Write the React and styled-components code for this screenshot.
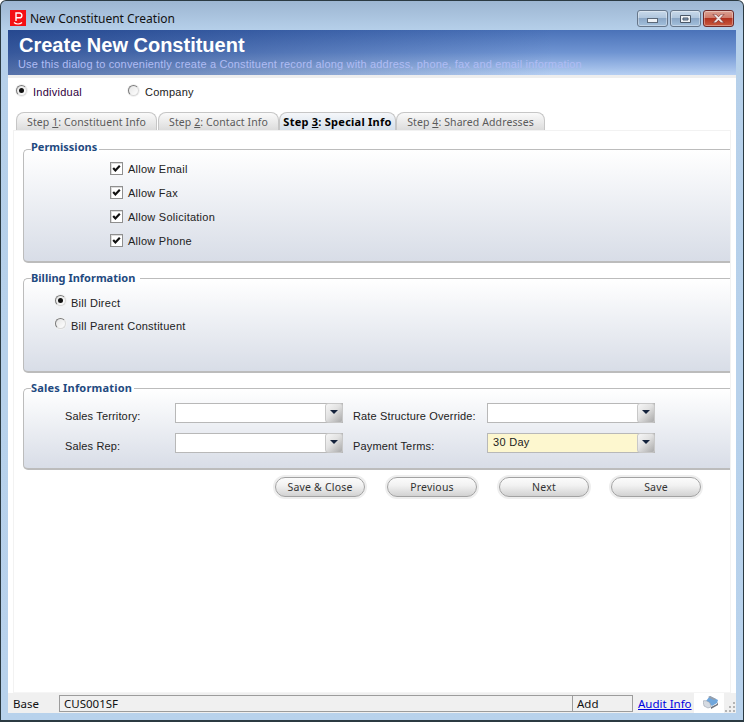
import React from 'react';
import styled, { createGlobalStyle } from 'styled-components';

const GlobalStyle = createGlobalStyle`
  html, body { margin: 0; padding: 0; background: #fff; }
  * { box-sizing: border-box; }
`

const Win = styled.div`
  width: 744px;
  height: 722px;
  display: flex;
  flex-direction: column;
  padding: 0 7px 7px 7px;
  border: 1px solid #2b3a42;
  border-bottom-width: 2px;
  border-radius: 6px 6px 0 0;
  background: linear-gradient(180deg, #9db6d2 0, #b6d0ea 30px, #b8d2ec 100%);
  font-family: "Liberation Sans", Arial, sans-serif;
`

const TitleBar = styled.div`
  height: 29px;
  flex: none;
  display: flex;
  align-items: flex-start;
  padding: 9px 1px 0 2px;
`

const TitleText = styled.span`
  margin-left: 4px;
  font: 12px/18px "Noto Sans", sans-serif;
  color: #111;
`

const WinButtons = styled.div`
  margin-left: auto;
  display: flex;
  gap: 2px;
  margin-right: 1px;
`

const WinButton = styled.div`
  width: 31px;
  height: 17px;
  display: flex;
  align-items: center;
  justify-content: center;
  border: 1px solid ${p => (p.$close ? '#6e2a2a' : '#66768a')};
  border-radius: 3px;
  box-shadow: inset 0 0 0 1px rgba(255, 255, 255, 0.35);
  background: ${p => p.$close
    ? 'linear-gradient(180deg, #dba193 0, #cf7b6b 45%, #b2321f 50%, #c9593f 100%)'
    : 'linear-gradient(180deg, #c8d9ea 0, #b0c6dd 45%, #8ba7c6 50%, #a3c0dc 100%)'};
`

const Client = styled.div`
  flex: 1;
  display: flex;
  flex-direction: column;
  background: #fff;
  min-height: 0;
`

const Banner = styled.div`
  height: 45px;
  flex: none;
  padding: 4px 11px 0 10px;
  background:
    linear-gradient(90deg, rgba(8, 38, 110, 0.55) 0, rgba(60, 100, 180, 0) 75%),
    linear-gradient(180deg, #4a72b8 0, #6f94d2 50%, #b6cff2 100%);
`

const BannerTitle = styled.div`
  font-size: 20px;
  line-height: 23px;
  font-weight: bold;
  color: #fff;
  margin-left: 1px;
`

const BannerSub = styled.div`
  font-size: 11px;
  line-height: 14px;
  letter-spacing: 0.17px;
  color: #b0bcf4;
  white-space: nowrap;
`

const Strip = styled.div`
  height: 3px;
  flex: none;
  background: #eeeeee;
`

const Body = styled.div`
  flex: 1;
  display: flex;
  flex-direction: column;
  min-height: 0;
  padding: 0 0 0 5px;
`

const TypeRow = styled.div`
  display: flex;
  height: 34px;
  padding: 6px 0 0 3px;
  flex: none;
`

const Choice = styled.label`
  display: flex;
  align-items: center;
  gap: ${p => p.$gap || 6}px;
  height: ${p => p.$h || 16}px;
  width: ${p => (p.$w ? `${p.$w}px` : 'auto')};
  font-size: 11px;
  letter-spacing: 0.25px;
  color: ${p => p.$color || '#222'};
`

const Radio = styled.span`
  width: 11px;
  height: 11px;
  flex: none;
  display: flex;
  align-items: center;
  justify-content: center;
  margin-top: -4px;
  border-radius: 50%;
  border: 1px solid;
  border-color: #7a7a7a #d8d8d8 #d8d8d8 #7a7a7a;
  background: linear-gradient(135deg, #e4e4e4, #fff);
  box-shadow: 0 0 0 1px #f2f2f2;
  &::after {
    content: '';
    width: 5px;
    height: 5px;
    border-radius: 50%;
    background: ${p => (p.$on ? '#111' : 'transparent')};
  }
`

const Tabs = styled.div`
  display: flex;
  height: 18px;
  flex: none;
  padding-left: 3px;
`

const Tab = styled.div`
  width: ${p => p.$w}px;
  margin-right: ${p => p.$gap}px;
  height: 18px;
  display: flex;
  justify-content: center;
  align-items: center;
  white-space: nowrap;
  border: 1px solid #c6c6c6;
  border-bottom: none;
  border-radius: 8px 8px 0 0;
  font: ${p => (p.$active ? 'bold 11px' : '10.5px')} "Noto Sans", sans-serif;
  letter-spacing: ${p => (p.$active ? 0.25 : 0.1)}px;
  color: ${p => (p.$active ? '#000' : '#5a5a5a')};
  background: ${p => p.$active
    ? 'linear-gradient(180deg, #f5f7fa 0, #d5dfea 100%)'
    : 'linear-gradient(180deg, #fafafa 0, #dcdcdc 100%)'};
`

const Pane = styled.div`
  flex: 1;
  display: flex;
  flex-direction: column;
  margin-right: 5px;
  padding: 9px 0 0 9px;
  border: 1px solid #f2f2f2;
  border-bottom-color: #f5f5f5;
`

const Group = styled.fieldset`
  height: ${p => p.$h}px;
  flex: none;
  margin: 0 0 8px;
  padding: ${p => p.$pt}px 0 0 0;
  min-width: 0;
  border: 1px solid #bcbcbc;
  border-right: none;
  border-radius: 5px 0 0 5px;
  border-bottom-width: 2px;
  background: linear-gradient(180deg, #ffffff 0, #d8dde7 100%);
`

const Legend = styled.legend`
  margin-left: 7px;
  padding: 0 ${p => p.$pr || 2}px ${p => p.$pb || 0}px 0;
  font: bold 11px/14px "Noto Sans", sans-serif;
  letter-spacing: ${p => p.$ls || 0}px;
  color: #1f4a80;
`

const CheckBox = styled.span`
  width: 13px;
  height: 13px;
  flex: none;
  display: flex;
  align-items: center;
  justify-content: center;
  margin-top: -2px;
  border: 1px solid #8f8f8f;
  box-shadow: inset 1px 1px 0 #ddd;
  background: #fff;
`

const ChoiceStack = styled.div`
  display: flex;
  flex-direction: column;
  margin: ${p => p.$mt || 0}px 0 0 ${p => p.$ml}px;
`

const CheckRow = styled(Choice)`
  height: 24px;
`

const RadioRow = styled(Choice)`
  height: 23px;
`

const SalesGrid = styled.div`
  display: grid;
  margin-left: 41px;
  grid-template-columns: 110px 168px 144px 168px;
  grid-auto-rows: 20px;
  row-gap: 10px;
  align-items: center;
`

const FieldLabel = styled.span`
  font-size: 11px;
  letter-spacing: 0.15px;
  color: #222;
  margin-left: ${p => p.$ml || 0}px;
  padding-top: 5px;
  white-space: nowrap;
`

const Select = styled.div`
  height: 20px;
  display: flex;
  border: 1px solid #b8b8b8;
  background: ${p => p.$bg || '#fff'};
  font-size: 11px;
  letter-spacing: 0.3px;
  color: #222;
  line-height: 17px;
  padding-left: 5px;
`

const SelectValue = styled.span`
  flex: 1;
`

const ArrowButton = styled.span`
  width: 18px;
  flex: none;
  margin: -1px -1px -1px 0;
  display: flex;
  justify-content: center;
  padding-top: 6px;
  border-radius: 3px;
  border: 1px solid #c8c8c8;
  background: linear-gradient(135deg, #f6f6f6 0, #e2e2e2 45%, #a9a9a9 100%);
  &::after {
    content: '';
    width: 0;
    height: 0;
    border-left: 4px solid transparent;
    border-right: 4px solid transparent;
    border-top: 4px solid #14233c;
  }
`

const Actions = styled.div`
  display: flex;
  gap: 22px;
  padding: 0 0 0 252px;
  margin-top: -1px;
`

const ActionButton = styled.button`
  width: 90px;
  height: 20px;
  padding: 0;
  border: 1px solid #a2a2a2;
  border-radius: 10px;
  box-shadow: 0 0 0 2px #eeeeee;
  background: linear-gradient(180deg, #fbfbfb 0, #f2f2f2 40%, #d2d2d2 100%);
  font: 10.5px "Noto Sans", sans-serif;
  letter-spacing: 0.2px;
  color: #333;
`

const StatusBar = styled.div`
  height: 20px;
  flex: none;
  display: flex;
  align-items: center;
  background: #f0f0f0;
  font: 11.5px "Noto Sans", sans-serif;
  color: #111;
  white-space: nowrap;
`

const BaseLabel = styled.span`
  width: 51px;
  flex: none;
  padding-left: 5px;
`

const StatusCell = styled.span`
  width: ${p => p.$w}px;
  flex: none;
  height: 17px;
  margin-left: ${p => p.$ml || 0}px;
  padding-left: 4px;
  border: 1px solid #9c9c9c;
  line-height: 15px;
`

const AuditLink = styled.a`
  margin-left: 5px;
  width: 56px;
  flex: none;
  color: #0000e0;
  text-decoration: underline;
  cursor: pointer;
`

const StatusIcon = styled.span`
  width: 30px;
  height: 20px;
  flex: none;
  display: flex;
  align-items: flex-start;
  background: #fff;
  padding: 3px 0 0 9px;
`

const Grip = styled.span`
  margin-left: 1px;
  align-self: flex-end;
  line-height: 0;
`

function AppIcon() {
  return (
    <svg width="16" height="16" viewBox="0 0 16 16">
      <rect width="16" height="16" fill="#f40f14" />
      <path d="M6 11V3h3.5a2.3 2.3 0 0 1 0 4.8H6" fill="none" stroke="#fff" strokeWidth="1.4" />
      <path d="M4 12.5c2 2 6 2 8 0" fill="none" stroke="#fff" strokeWidth="1.2" />
    </svg>
  )
}

function CheckMark() {
  return (
    <svg width="9" height="9" viewBox="0 0 9 9">
      <path d="M1.2 4l2.2 2.4L7.8 1.8" fill="none" stroke="#111" strokeWidth="2.2" />
    </svg>
  )
}

function Step({ n, label }) {
  return <span>Step <u>{n}</u>: {label}</span>
}

function PrinterIcon() {
  return (
    <svg width="16" height="13" viewBox="0 0 16 13">
      <path d="M3 5l4-5 8 4-1 3-5 3z" fill="#6fa6dc" />
      <path d="M5 1l2-1 6 3-2 1z" fill="#9a9fa8" />
      <path d="M0 5c2-1 5 0 7 2l1 4-3 1-4-2z" fill="#d6dbe2" stroke="#8c94a0" strokeWidth="0.5" />
      <path d="M8 11l6-3 1-2v3l-7 4z" fill="#6d7480" />
    </svg>
  )
}

function GripIcon() {
  return (
    <svg width="11" height="11" viewBox="0 0 11 11" fill="#b4b4b4">
      <rect x="8" y="0" width="2" height="2" />
      <rect x="4" y="4" width="2" height="2" />
      <rect x="8" y="4" width="2" height="2" />
      <rect x="0" y="8" width="2" height="2" />
      <rect x="4" y="8" width="2" height="2" />
      <rect x="8" y="8" width="2" height="2" />
    </svg>
  )
}

const steps = [
  { n: 1, label: 'Constituent Info', w: 141, gap: 1 },
  { n: 2, label: 'Contact Info', w: 121, gap: 0 },
  { n: 3, label: 'Special Info', w: 117, gap: 0, active: true },
  { n: 4, label: 'Shared Addresses', w: 149, gap: 0 },
];

const permissions = ['Allow Email', 'Allow Fax', 'Allow Solicitation', 'Allow Phone'];

function App() {
  return (
    <Win>
      <GlobalStyle />
      <TitleBar>
        <AppIcon />
        <TitleText>New Constituent Creation</TitleText>
        <WinButtons>
          <WinButton>
            <svg width="11" height="9" viewBox="0 0 11 9"><rect x="0.5" y="4.5" width="10" height="4" fill="#eef2f6" stroke="#5b6878" /></svg>
          </WinButton>
          <WinButton>
            <svg width="11" height="8" viewBox="0 0 11 8"><path d="M0.5 0.5h10v7h-10zM3 3h5v2h-5z" fill="#eef2f6" fillRule="evenodd" stroke="#4a5868" /></svg>
          </WinButton>
          <WinButton $close>
            <svg width="13" height="9" viewBox="0 0 15 10"><path d="M1 0h3.5L7.5 3l3-3H14l-4.5 5L14 10h-3.5l-3-3-3 3H1l4.5-5z" fill="#f2e8e8" stroke="#6a2020" strokeWidth="0.7" /></svg>
          </WinButton>
        </WinButtons>
      </TitleBar>
      <Client>
        <Banner>
          <BannerTitle>Create New Constituent</BannerTitle>
          <BannerSub>Use this dialog to conveniently create a Constituent record along with address, phone, fax and email information</BannerSub>
        </Banner>
        <Strip />
        <Body>
          <TypeRow>
            <Choice $w={112} $gap={6} $color="#300040"><Radio $on />Individual</Choice>
            <Choice $gap={6}><Radio />Company</Choice>
          </TypeRow>
          <Tabs>
            {steps.map(s => (
              <Tab key={s.n} $w={s.w} $gap={s.gap} $active={s.active}>
                <Step n={s.n} label={s.label} />
              </Tab>
            ))}
          </Tabs>
          <Pane>
            <Group $h={123} $pt={0}>
              <Legend $pb={4}>Permissions</Legend>
              <ChoiceStack $ml={86} $mt={-1}>
                {permissions.map(p => (
                  <CheckRow key={p} $gap={5}><CheckBox><CheckMark /></CheckBox>{p}</CheckRow>
                ))}
              </ChoiceStack>
            </Group>
            <Group $h={102} $pt={6}>
              <Legend $pr={5}>Billing Information</Legend>
              <ChoiceStack $ml={31}>
                <RadioRow $gap={5}><Radio $on />Bill Direct</RadioRow>
                <RadioRow $gap={5}><Radio />Bill Parent Constituent</RadioRow>
              </ChoiceStack>
            </Group>
            <Group $h={89} $pt={8}>
              <Legend $ls={0.2}>Sales Information</Legend>
              <SalesGrid>
                <FieldLabel>Sales Territory:</FieldLabel>
                <Select><SelectValue /><ArrowButton /></Select>
                <FieldLabel $ml={10}>Rate Structure Override:</FieldLabel>
                <Select><SelectValue /><ArrowButton /></Select>
                <FieldLabel>Sales Rep:</FieldLabel>
                <Select><SelectValue /><ArrowButton /></Select>
                <FieldLabel $ml={10}>Payment Terms:</FieldLabel>
                <Select $bg="#fdf7cf"><SelectValue>30 Day</SelectValue><ArrowButton /></Select>
              </SalesGrid>
            </Group>
            <Actions>
              <ActionButton>Save &amp; Close</ActionButton>
              <ActionButton>Previous</ActionButton>
              <ActionButton>Next</ActionButton>
              <ActionButton>Save</ActionButton>
            </Actions>
          </Pane>
        </Body>
        <StatusBar>
          <BaseLabel>Base</BaseLabel>
          <StatusCell $w={514}>CUS001SF</StatusCell>
          <StatusCell $w={61} $ml={-1}>Add</StatusCell>
          <AuditLink>Audit Info</AuditLink>
          <StatusIcon><PrinterIcon /></StatusIcon>
          <Grip><GripIcon /></Grip>
        </StatusBar>
      </Client>
    </Win>
  )
}

export default App;
